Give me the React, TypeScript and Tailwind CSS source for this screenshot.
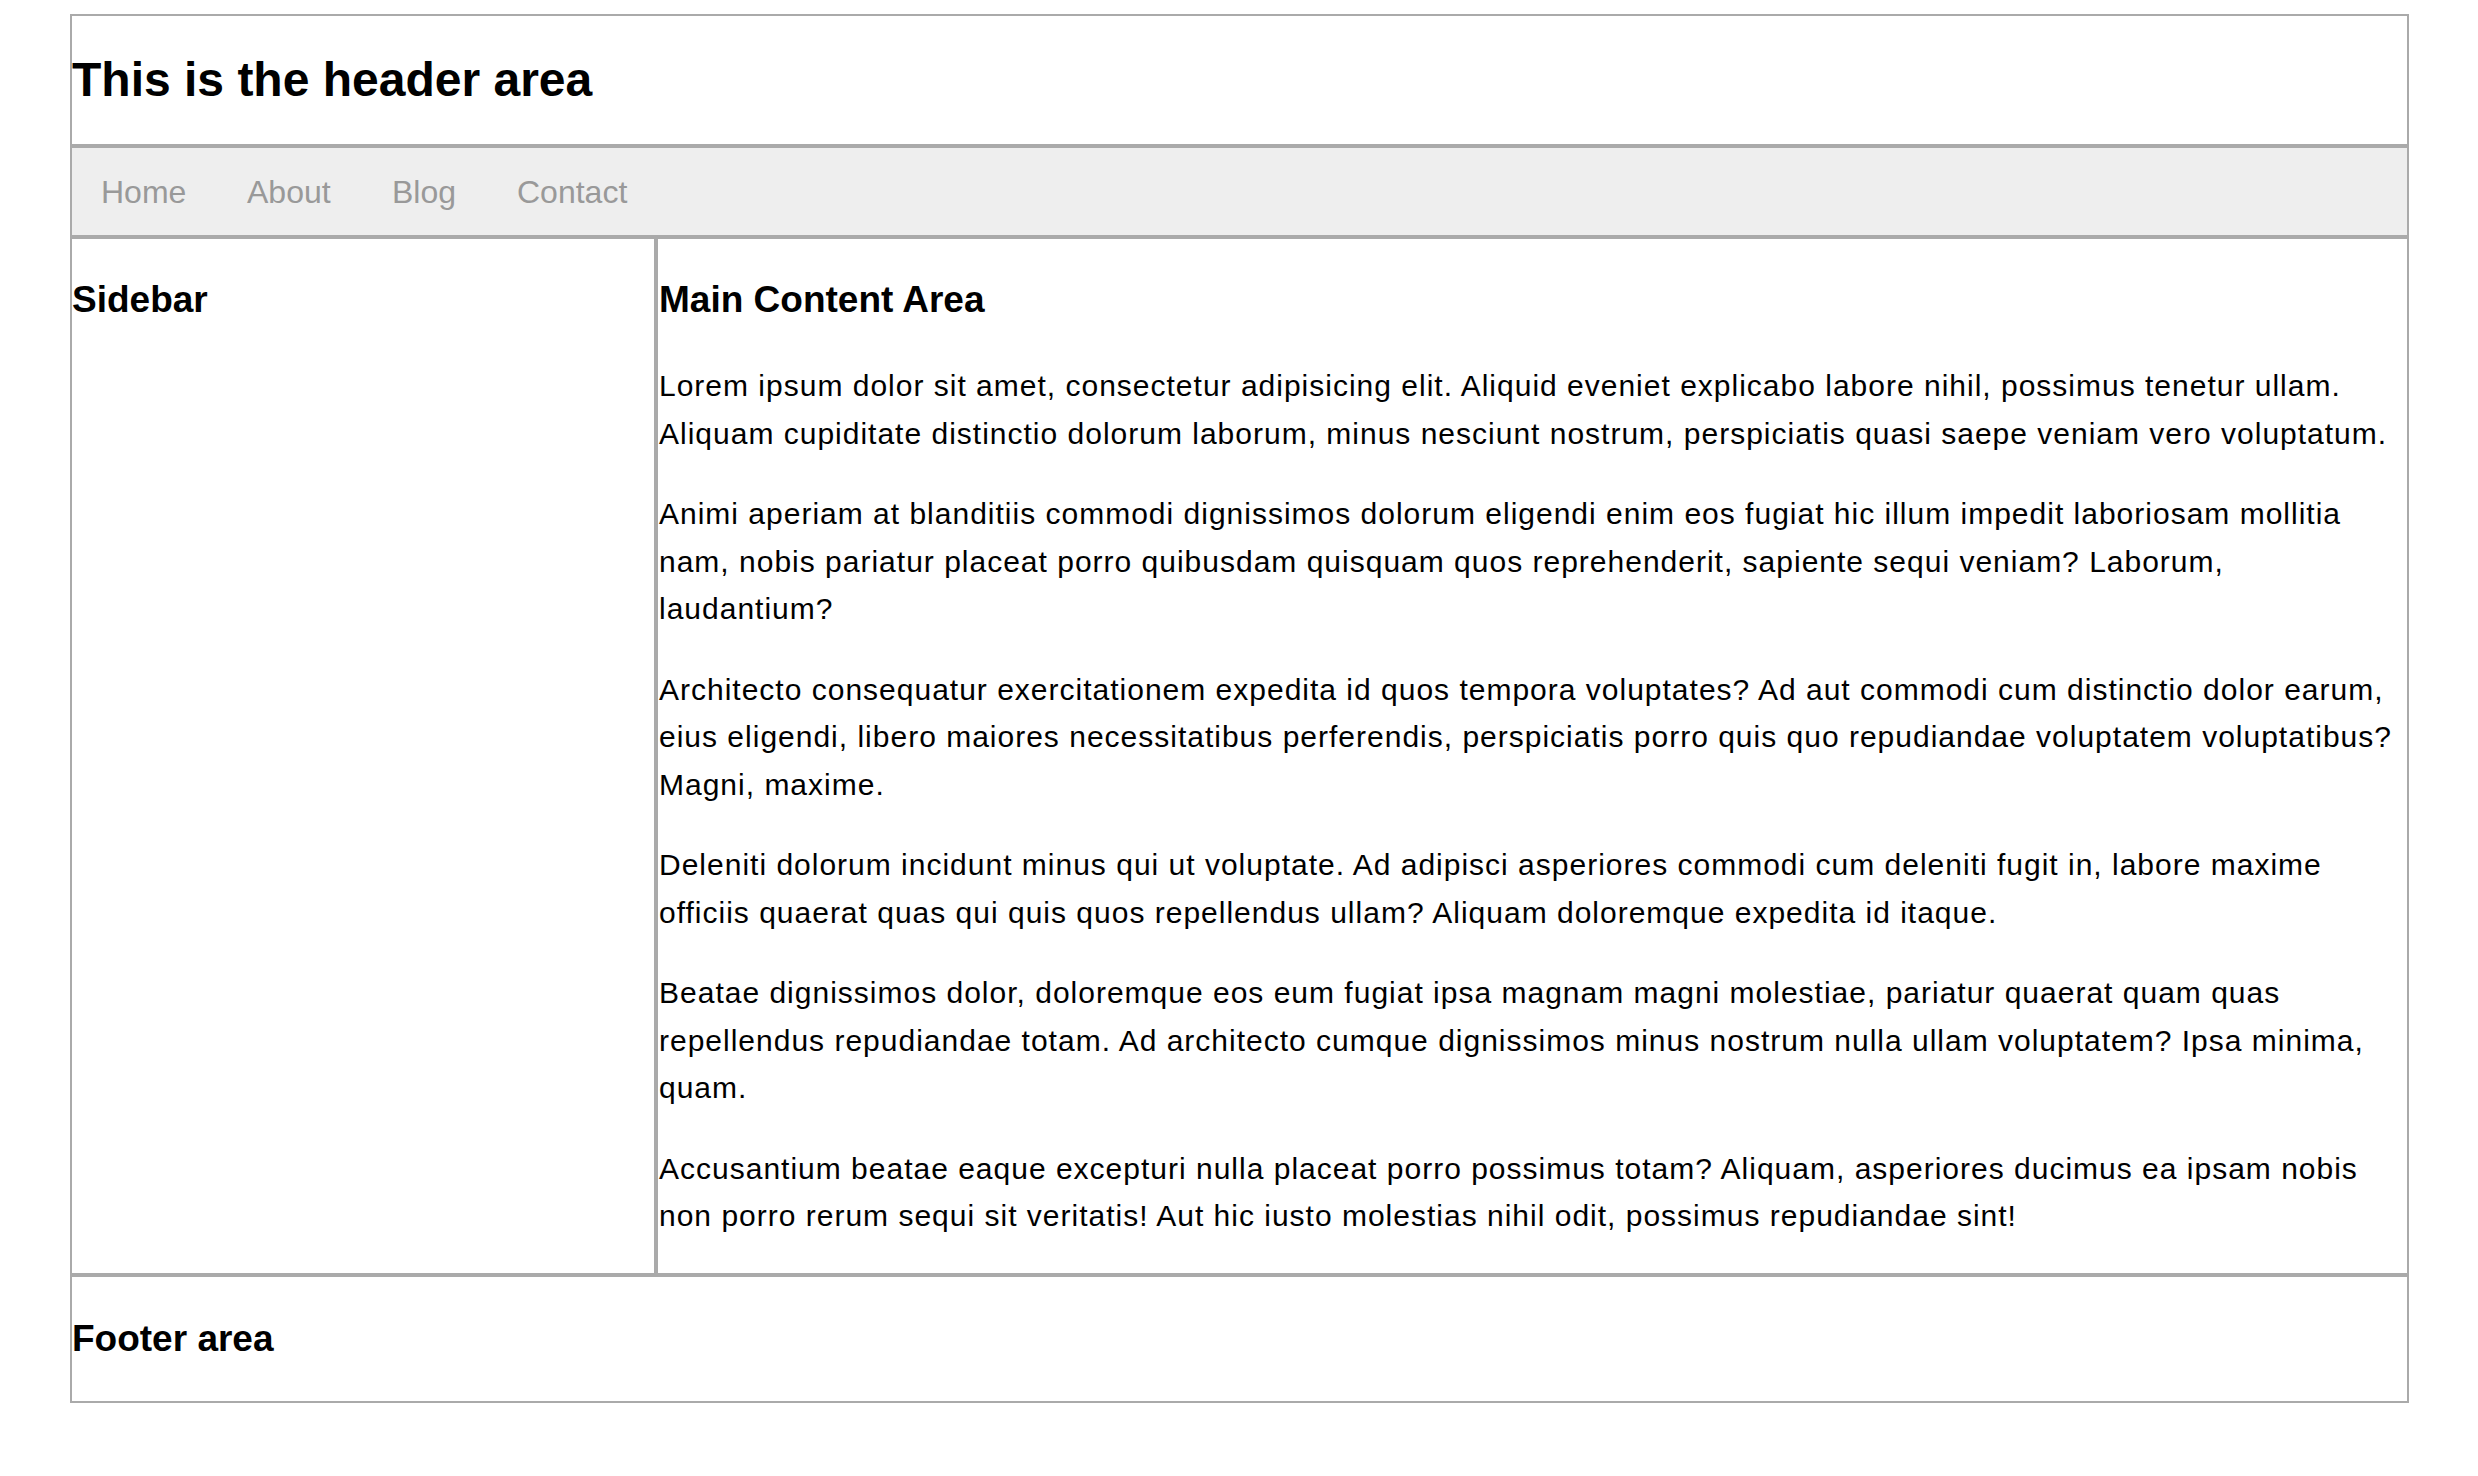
const paragraphs = [
  'Lorem ipsum dolor sit amet, consectetur adipisicing elit. Aliquid eveniet explicabo labore nihil, possimus tenetur ullam. Aliquam cupiditate distinctio dolorum laborum, minus nesciunt nostrum, perspiciatis quasi saepe veniam vero voluptatum.',
  'Animi aperiam at blanditiis commodi dignissimos dolorum eligendi enim eos fugiat hic illum impedit laboriosam mollitia nam, nobis pariatur placeat porro quibusdam quisquam quos reprehenderit, sapiente sequi veniam? Laborum, laudantium?',
  'Architecto consequatur exercitationem expedita id quos tempora voluptates? Ad aut commodi cum distinctio dolor earum, eius eligendi, libero maiores necessitatibus perferendis, perspiciatis porro quis quo repudiandae voluptatem voluptatibus? Magni, maxime.',
  'Deleniti dolorum incidunt minus qui ut voluptate. Ad adipisci asperiores commodi cum deleniti fugit in, labore maxime officiis quaerat quas qui quis quos repellendus ullam? Aliquam doloremque expedita id itaque.',
  'Beatae dignissimos dolor, doloremque eos eum fugiat ipsa magnam magni molestiae, pariatur quaerat quam quas repellendus repudiandae totam. Ad architecto cumque dignissimos minus nostrum nulla ullam voluptatem? Ipsa minima, quam.',
  'Accusantium beatae eaque excepturi nulla placeat porro possimus totam? Aliquam, asperiores ducimus ea ipsam nobis non porro rerum sequi sit veritatis! Aut hic iusto molestias nihil odit, possimus repudiandae sint!',
]

const navItems = [
  { label: 'Home', width: 'w-[146px]' },
  { label: 'About', width: 'w-[145px]' },
  { label: 'Blog', width: 'w-[125px]' },
  { label: 'Contact', width: 'w-auto' },
]

export default function App() {
  return (
    <div className="min-h-screen bg-white font-['Liberation_Sans',Arial,Helvetica,sans-serif] text-black">
      <div className="ml-[70px] pt-[14px]">
        <div className="w-[2339px] border-2 border-[#aaa]">
          <header className="flex h-[132px] items-center border-b-4 border-[#aaa]">
            <h1 className="text-[48px] font-bold leading-[58px]">This is the header area</h1>
          </header>

          <nav className="flex h-[91px] items-center border-b-4 border-[#aaa] bg-[#eee] pl-[29px]">
            {navItems.map((item) => (
              <a key={item.label} href="#" className={`${item.width} text-[32px] leading-[40px] text-[#999]`}>
                {item.label}
              </a>
            ))}
          </nav>

          <div className="flex">
            <aside className="w-[586px] shrink-0 border-r-4 border-[#aaa] pt-[39px]">
              <h3 className="text-[37px] font-bold leading-[44px]">Sidebar</h3>
            </aside>

            <main className="flex-1 pl-px pt-[39px]">
              <h2 className="mb-[40px] text-[37px] font-bold leading-[44px]">Main Content Area</h2>
              {paragraphs.map((text, i) => (
                <p key={i} className="mb-[33px] text-[30px] leading-[47.5px] tracking-[1px]">
                  {text}
                </p>
              ))}
            </main>
          </div>

          <footer className="flex h-[128px] items-center border-t-4 border-[#aaa]">
            <h3 className="text-[37px] font-bold leading-[44px]">Footer area</h3>
          </footer>
        </div>
      </div>
    </div>
  )
}
